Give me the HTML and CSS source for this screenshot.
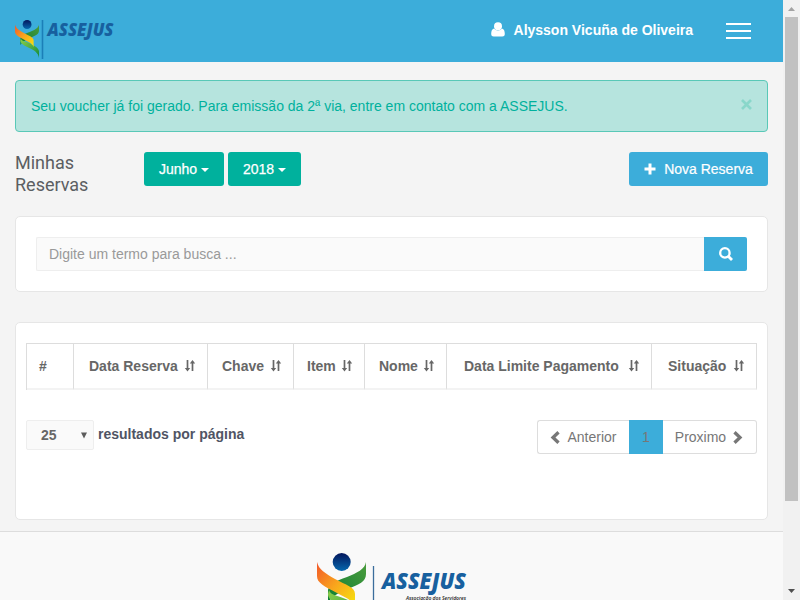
FILE: index.html
```html
<!DOCTYPE html>
<html lang="pt-BR">
<head>
<meta charset="utf-8">
<title>Minhas Reservas</title>
<link rel="stylesheet" href="styles.css">
</head>
<body>
<svg width="0" height="0" class="defs">
  <defs>
    <linearGradient id="head" x1="0" y1="0" x2="0" y2="1"><stop offset="0" stop-color="#03165c"/><stop offset="1" stop-color="#0568ae"/></linearGradient>
    <linearGradient id="warm" x1="0" y1="0" x2="1" y2="1"><stop offset="0" stop-color="#f2572b"/><stop offset=".5" stop-color="#f9a61c"/><stop offset="1" stop-color="#f5e50d"/></linearGradient>
    <linearGradient id="leaf" x1="1" y1="0" x2="0" y2="1"><stop offset="0" stop-color="#4b9c3c"/><stop offset="1" stop-color="#0b7d36"/></linearGradient>
    <linearGradient id="lime" x1="0" y1="0" x2="1" y2="1"><stop offset="0" stop-color="#8ed04b"/><stop offset="1" stop-color="#118a3a"/></linearGradient>
    <symbol id="figure" viewBox="0 0 49 76" preserveAspectRatio="none">
      <circle cx="24.7" cy="9" r="9" fill="url(#head)"/>
      <path d="M49 9C48 16 40 20 30 24C18 28 12 32 11 37V50C14 44 21 40 31 36C42 31 49 29 49 21Z" fill="url(#leaf)"/>
      <path d="M11 41C11 46 16 50 27 55C39 60 48 66 49 76V62C48 56 41 52 31 47C21 42 14 43 12 37Z" fill="url(#lime)"/>
      <path d="M0 9C2 17 8 20 18 26C29 32 38 34 38 41V54C36 48 30 45 20 40C7 33 0 30 0 23Z" fill="url(#warm)"/>
    </symbol>
    <symbol id="sort" viewBox="0 0 12 12">
      <path d="M3.500 0V9M8.500 11V2" stroke="currentColor" stroke-width="1.700" fill="none"/>
      <path d="M.8 8H6.200L3.500 11.500ZM5.800 3.500H11.200L8.500 0Z" fill="currentColor"/>
    </symbol>
  </defs>
</svg>
<div class="window">
  <div class="app">
    <header class="topbar">
      <svg class="brand" width="104" height="42" viewBox="0 0 104 42">
        <use href="#figure" x="0" y="1" width="24" height="38"/>
        <path d="M27.500 1V40" stroke="#1b7fb8" stroke-width="1.600"/>
        <text class="logo-text" x="32.500" y="17" font-size="17" textLength="66" lengthAdjust="spacingAndGlyphs">ASSEJUS</text>
      </svg>
      <div class="user">
        <svg class="user-icon" width="14" height="15" viewBox="0 0 14 15"><circle cx="7" cy="4.200" r="4" fill="#fff"/><path d="M3 6.500C1 7 .2 9 .2 12C.2 13.700 1.200 14.500 2.700 14.500H11.300C12.800 14.500 13.800 13.700 13.800 12C13.800 9 13 7 11 6.500C9 9 5 9 3 6.500Z" fill="#fff"/></svg>
        <span>Alysson Vicuña de Oliveira</span>
      </div>
      <div class="menu"><i></i><i></i><i></i></div>
    </header>
    <main class="content">
      <div class="alert">
        <span>Seu voucher já foi gerado. Para emissão da 2ª via, entre em contato com a ASSEJUS.</span>
        <svg class="close" width="11" height="11" viewBox="0 0 11 11"><path d="M1 1L10 10M10 1L1 10" stroke="#89d7ca" stroke-width="2.700"/></svg>
      </div>
      <div class="heading">
        <h1>Minhas Reservas</h1>
        <div class="filters">
          <button class="btn green month">Junho <b class="caret"></b></button>
          <button class="btn green year">2018 <b class="caret"></b></button>
        </div>
        <button class="btn blue new"><svg width="12" height="12" viewBox="0 0 12 12"><path d="M6 .5V11.500M.5 6H11.500" stroke="#fff" stroke-width="3"/></svg><span>Nova Reserva</span></button>
      </div>
      <section class="panel search">
        <div class="field">Digite um termo para busca ...</div>
        <button class="go"><svg width="14" height="14" viewBox="0 0 14 14"><circle cx="5.900" cy="5.900" r="4.700" fill="none" stroke="#fff" stroke-width="2.300"/><path d="M9 9L13 13" stroke="#fff" stroke-width="2.800"/></svg></button>
      </section>
      <section class="panel results">
        <table>
          <colgroup><col class="c1"><col class="c2"><col class="c3"><col class="c4"><col class="c5"><col class="c6"><col class="c7"></colgroup>
          <tr>
            <th class="num">#</th>
            <th><div class="th"><span>Data Reserva</span><svg width="12" height="12"><use href="#sort"/></svg></div></th>
            <th><div class="th"><span>Chave</span><svg width="12" height="12"><use href="#sort"/></svg></div></th>
            <th><div class="th"><span>Item</span><svg width="12" height="12"><use href="#sort"/></svg></div></th>
            <th><div class="th"><span>Nome</span><svg width="12" height="12"><use href="#sort"/></svg></div></th>
            <th><div class="th"><span>Data Limite Pagamento</span><svg width="12" height="12"><use href="#sort"/></svg></div></th>
            <th><div class="th"><span>Situação</span><svg width="12" height="12"><use href="#sort"/></svg></div></th>
          </tr>
        </table>
        <div class="table-foot">
          <div class="size"><span>25</span><svg width="6" height="7" viewBox="0 0 6 7"><path d="M0 .5H6L3 6.500Z" fill="#5c5c5c"/></svg></div>
          <label>resultados por página</label>
          <div class="pages">
            <span class="prev"><svg width="10" height="13" viewBox="0 0 10 13"><path d="M8.500 1.200L3 6.500L8.500 11.800" fill="none" stroke="#777" stroke-width="3.300"/></svg>Anterior</span>
            <span class="current">1</span>
            <span class="next">Proximo<svg width="10" height="13" viewBox="0 0 10 13"><path d="M1.500 1.200L7 6.500L1.500 11.800" fill="none" stroke="#777" stroke-width="3.300"/></svg></span>
          </div>
        </div>
      </section>
    </main>
    <footer>
      <svg width="156" height="80" viewBox="0 0 156 80">
        <use href="#figure" x="1" y="1" width="49" height="76"/>
        <path d="M57.500 14V80" stroke="#3b6d9c" stroke-width="1.300"/>
        <text class="logo-text" x="66" y="37" font-size="22.500" textLength="84" lengthAdjust="spacingAndGlyphs">ASSEJUS</text>
        <text class="logo-sub" x="90" y="48" font-size="6" textLength="60" lengthAdjust="spacingAndGlyphs">Associação dos Servidores</text>
      </svg>
    </footer>
  </div>
  <div class="scrollbar">
    <svg class="up" width="7" height="4" viewBox="0 0 7 4"><path d="M0 4L3.500 0L7 4Z" fill="#a3a3a3"/></svg>
    <div class="thumb"></div>
    <svg class="down" width="7" height="4" viewBox="0 0 7 4"><path d="M0 0L3.500 4L7 0Z" fill="#505050"/></svg>
  </div>
</div>
</body>
</html>
```
FILE: styles.css
```css
* { box-sizing: border-box; }
html, body { margin: 0; height: 600px; overflow: hidden; }
body { font: 14px/20px "Liberation Sans", Arial, sans-serif; color: #676767; background: #f4f4f4; }
svg { display: block; flex: none; }
.defs { position: absolute; }
button { border: 0; margin: 0; padding: 0; font: inherit; }
.window { display: flex; height: 600px; overflow: hidden; }
.app { width: 783px; flex: none; }

.topbar { height: 62px; background: #3cadda; display: flex; align-items: flex-start; padding: 0 32px 0 15px; }
.brand { margin-top: 19px; }
.logo-text { font-family: "Open Sans", sans-serif; font-weight: 800; font-style: italic; fill: #17609f; }
.logo-sub { font-family: "Open Sans", sans-serif; font-weight: 600; font-style: italic; fill: #222; }
.user { display: flex; margin: 20px 33px 0 auto; color: #fff; font-weight: bold; }
.user-icon { margin: 2px 9px 0 0; }
.menu { width: 25px; margin-top: 23px; display: grid; gap: 5px; }
.menu i { height: 2px; background: #fff; }

.content { padding: 18px 15px 0; }
.alert { height: 52px; border: 1px solid #59c8b7; border-radius: 4px; background: #b6e4de; color: #00b19d; padding: 0 15px; display: flex; justify-content: space-between; align-items: center; }
.close { margin-top: -3px; }
.heading { display: flex; margin-top: 20px; height: 64px; align-items: flex-start; }
h1 { font: 400 18px/22px Roboto, sans-serif; color: #5b5e62; width: 129px; padding-right: 40px; margin: 0; }
.filters { display: flex; gap: 4px; }
.btn { height: 34px; border-radius: 3px; color: #fff; display: flex; align-items: center; justify-content: center; }
.green { background: #00b19d; -webkit-text-stroke: .25px #fff; }
.month { width: 80px; }
.year { width: 73px; }
.caret { border: 4px solid transparent; border-top-color: #fff; border-bottom: 0; margin: 2px 0 0 4px; }
.blue { background: #3cadda; }
.new { width: 139px; margin-left: auto; gap: 8px; }
.new span { -webkit-text-stroke: .2px #fff; }

.panel { background: #fff; border: 1px solid #e6e6e6; border-radius: 5px; }
.search { height: 76px; padding: 20px; display: flex; }
.field { flex: 1; height: 34px; border: 1px solid #eee; border-right: 0; border-radius: 2px 0 0 2px; background: #fafafa; color: #999; padding: 6px 12px; }
.go { width: 43px; height: 34px; background: #3cadda; border-radius: 0 2px 2px 0; display: grid; place-items: center; }

.results { height: 198px; margin-top: 30px; padding: 20px 10px 0; }
table { border-collapse: separate; border-spacing: 0; table-layout: fixed; width: 731px; height: 47px; border-left: 1px solid #ddd; }
.c1 { width: 47px; }
.c2 { width: 134px; }
.c3 { width: 86px; }
.c4 { width: 71px; }
.c5 { width: 82px; }
.c6 { width: 205px; }
.c7 { width: 105px; }
th { height: 47px; padding: 0 11px 0 14px; border: 1px solid #ddd; border-left: 0; border-bottom: 2px solid #f3f3f3; text-align: left; }
th.num { padding-left: 12px; }
.th { display: flex; justify-content: space-between; align-items: center; }
th:nth-child(2) { padding-left: 15px; }
th:nth-child(4) { padding-left: 13px; }
th:nth-child(6) { padding-left: 17px; }
th:nth-child(7) { padding-left: 16px; }
.table-foot { display: flex; margin-top: 30px; align-items: flex-start; }
.size { width: 68px; height: 30px; border: 1px solid #eee; border-radius: 2px; background: #fafafa; font-weight: bold; display: flex; align-items: center; justify-content: space-between; padding: 0 6px 0 14px; }
label { margin: 4px 0 0 4px; color: #505464; font-weight: bold; }
.pages { display: flex; margin-left: auto; color: #777; }
.pages span { height: 34px; border: 1px solid #ddd; display: flex; align-items: center; justify-content: center; }
.pages .prev { width: 92px; border-right: 0; border-radius: 3px 0 0 3px; gap: 7px; }
.pages .current { width: 34px; background: #3cadda; border-color: #3cadda; }
.pages .next { width: 94px; border-left: 0; border-radius: 0 3px 3px 0; gap: 7px; padding-right: 1px; }

footer { margin-top: 11px; height: 69px; border-top: 1px solid #ddd; background: #f9f9f9; padding: 20px 0 0 316px; overflow: hidden; }

.scrollbar { width: 17px; background: #f1f1f1; display: flex; flex-direction: column; align-items: center; padding: 7px 0; }
.thumb { width: 13px; height: 484px; margin-top: 6px; background: #c1c1c1; }
.down { margin-top: auto; }
```
